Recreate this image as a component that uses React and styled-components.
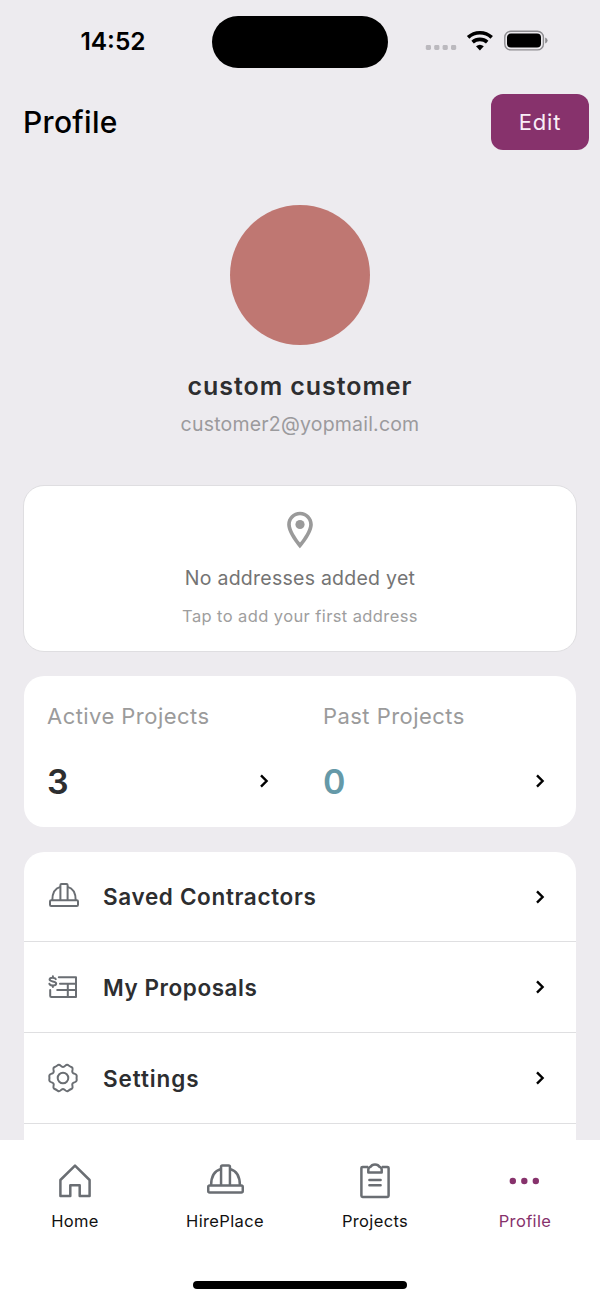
import styled, { createGlobalStyle } from 'styled-components';

const GlobalStyle = createGlobalStyle`
  * {
    box-sizing: border-box;
  }
  body {
    margin: 0;
    font-family: Inter, Roboto, sans-serif;
    background-color: #edebef;
  }
`;

const Screen = styled.div`
  display: flex;
  flex-direction: column;
  width: 600px;
  height: 1300px;
  overflow: hidden;
  background-color: #edebef;
`;

const StatusBar = styled.div`
  display: grid;
  grid-template-columns: 212px 176px 212px;
  align-items: center;
  height: 83px;
  flex-shrink: 0;
`;

const Time = styled.div`
  padding: 0 0 2px 14px;
  text-align: center;
  font-size: 24.5px;
  font-weight: 600;
  color: #000;
`;

const Island = styled.div`
  height: 52px;
  border-radius: 26px;
  background-color: #000;
`;

const StatusIcons = styled.div`
  display: flex;
  align-items: center;
  padding: 0 0 2px 37px;
  svg {
    display: block;
  }
`;

const Header = styled.div`
  display: flex;
  justify-content: space-between;
  align-items: center;
  height: 77px;
  padding: 0 11px 0 23px;
  flex-shrink: 0;
`;

const Text = styled.div`
  font-size: ${(props) => props.$size}px;
  font-weight: ${(props) => props.$weight || 400};
  line-height: ${(props) => props.$line}px;
  letter-spacing: ${(props) => props.$spacing || 0}px;
  color: ${(props) => props.$color || '#000'};
  white-space: nowrap;
`;

const EditButton = styled.button`
  width: 98px;
  height: 56px;
  padding: 0;
  border: none;
  border-radius: 12px;
  background-color: #87326c;
  color: #f9eef6;
  font-family: inherit;
  font-size: 22px;
  letter-spacing: 0.8px;
`;

const Content = styled.div`
  display: flex;
  flex-direction: column;
  flex: 1;
  min-height: 0;
  padding: 45px 24px 0;
  overflow: hidden;
`;

const User = styled.div`
  display: flex;
  flex-direction: column;
  align-items: center;
  height: 280px;
  flex-shrink: 0;
`;

const Avatar = styled.div`
  width: 140px;
  height: 140px;
  margin-bottom: 25px;
  border-radius: 50%;
  background-color: #bf7772;
`;

const AddressCard = styled.div`
  display: flex;
  flex-direction: column;
  align-items: center;
  height: 167px;
  margin: 0 -1px 24px;
  padding-top: 22px;
  border: 1px solid #dfdee1;
  border-radius: 21px;
  background-color: #fff;
  flex-shrink: 0;
`;

const Stats = styled.div`
  display: grid;
  grid-template-columns: 1fr 1fr;
  height: 151px;
  margin-bottom: 25px;
  border-radius: 20px;
  background-color: #fff;
  flex-shrink: 0;
`;

const Stat = styled.div`
  padding: 26px 30px 0 23px;
`;

const StatValue = styled.div`
  display: flex;
  justify-content: space-between;
  align-items: center;
  margin-top: 29px;
`;

const StatNumber = styled(Text)`
  padding-top: 2px;
  margin-bottom: -1px;
`;

const Menu = styled.div`
  border-radius: 20px 20px 0 0;
  background-color: #fff;
  flex-shrink: 0;
`;

const MenuRow = styled.div`
  display: flex;
  align-items: center;
  height: ${(props) => props.$height}px;
  padding: 0 30px 0 24px;
  border-bottom: 1px solid #dfdfe1;
`;

const MenuIcon = styled.div`
  display: flex;
  width: 55px;
`;

const HelmetBox = styled.div`
  display: flex;
  padding: ${(props) => props.$pad};
`;

const MenuLabel = styled(Text)`
  flex: 1;
  padding-top: 1px;
`;

const TabBar = styled.div`
  display: grid;
  grid-template-columns: repeat(4, 1fr);
  height: 160px;
  padding-top: 20px;
  background-color: #fff;
  flex-shrink: 0;
  position: relative;
`;

const Tab = styled.div`
  display: flex;
  flex-direction: column;
  align-items: center;
`;

const TabIcon = styled.div`
  display: flex;
  align-items: center;
  justify-content: center;
  height: 42px;
  margin-bottom: 9px;
`;

const HomeIndicator = styled.div`
  position: absolute;
  left: 193px;
  bottom: 11px;
  width: 214px;
  height: 8px;
  border-radius: 4px;
  background-color: #000;
`;

const iconGray = '#6a6e73';

const Chevron = () => (
  <svg width="12" height="16" viewBox="0 0 12 16" fill="none">
    <path d="M3 2.3 L8.6 8 L3 13.7" stroke="#000" strokeWidth="2.4" />
  </svg>
);

const Helmet = ({ width = 30, height = 24 }) => (
  <svg
    width={width}
    height={height}
    viewBox="0 0 30 24"
    fill="none"
    stroke={iconGray}
    strokeWidth="2"
    strokeLinejoin="round"
  >
    <rect x="1" y="17.3" width="28" height="5.7" rx="1.2" />
    <path d="M11.4 17.4 V2.1 Q11.4 1 12.5 1 H17.5 Q18.6 1 18.6 2.1 V17.4" />
    <path d="M11.4 3.9 C6.3 5.2 3.3 9.4 3.3 17.4 M18.6 3.9 C23.7 5.2 26.7 9.4 26.7 17.4" />
  </svg>
);

const Proposal = () => (
  <svg
    width="30"
    height="24"
    viewBox="0 0 30 24"
    fill="none"
    stroke={iconGray}
    strokeWidth="2"
    strokeLinecap="round"
    strokeLinejoin="round"
  >
    <path d="M10.8 2.2 H28 V22 H3.3 Q2.2 22 2.2 21 V15" />
    <path d="M12 8.8 H28 M9.2 15 H28 M19.8 8.8 V22" />
    <path d="M7.8 4.2 C7 2.3 1.6 2 1.6 4.6 C1.6 7.2 8.2 5.6 8.2 8.6 C8.2 11.2 2.2 11 1.4 8.8 M4.9 1.2 V2.6 M4.9 10.6 V12" />
  </svg>
);

// six rounded teeth, one every 60 degrees
const gearPath = () => {
  const point = (deg, r) => {
    const a = (deg * Math.PI) / 180;
    return `${(15 + r * Math.cos(a)).toFixed(2)} ${(15 + r * Math.sin(a)).toFixed(2)}`;
  };
  let d = `M${point(-24, 11.1)}`;
  for (let deg = 0; deg < 360; deg += 60) {
    d += ` L${point(deg - 19, 12.6)} Q${point(deg - 15, 14.1)} ${point(deg - 9, 13.9)}`;
    d += ` Q${point(deg, 13.4)} ${point(deg + 9, 13.9)} Q${point(deg + 15, 14.1)} ${point(deg + 19, 12.6)}`;
    d += ` Q${point(deg + 24, 11.1)} ${point(deg + 30, 11)} Q${point(deg + 36, 11.1)} ${point(deg + 41, 12.6)}`;
  }
  return `${d.replace(/^M\S+ \S+ L/, 'M')} Z`;
};

const Gear = () => (
  <svg
    width="30"
    height="30"
    viewBox="0 0 30 30"
    fill="none"
    stroke={iconGray}
    strokeWidth="2"
    strokeLinejoin="round"
  >
    <path d={gearPath()} />
    <circle cx="15" cy="15" r="5.3" />
  </svg>
);

const Pin = () => (
  <svg width="44" height="44" viewBox="0 0 24 24" fill="#9a9a9a">
    <path d="M12 2C8.13 2 5 5.13 5 9c0 5.25 7 13 7 13s7-7.75 7-13c0-3.87-3.13-7-7-7zM7 9c0-2.76 2.24-5 5-5s5 2.24 5 5c0 2.88-2.88 7.19-5 9.88C9.92 16.21 7 11.85 7 9z" />
    <circle cx="12" cy="9" r="2.5" />
  </svg>
);

const HomeIcon = () => (
  <svg
    width="34"
    height="34"
    viewBox="0 0 34 34"
    fill="none"
    stroke={iconGray}
    strokeWidth="2.5"
    strokeLinejoin="round"
  >
    <path d="M17 1.6 L31.6 16 V32 H21.7 V21.2 H12.3 V32 H2.4 V16 Z" />
  </svg>
);

const Clipboard = () => (
  <svg
    width="30"
    height="36"
    viewBox="0 0 30 36"
    fill="none"
    stroke={iconGray}
    strokeWidth="2.5"
    strokeLinejoin="round"
  >
    <path d="M8 3.9 H2.5 Q1.4 3.9 1.4 5 V32.8 Q1.4 34 2.6 34 H27.4 Q28.6 34 28.6 32.8 V5 Q28.6 3.9 27.5 3.9 H22" />
    <path d="M8.3 9.5 V6.5 Q8.5 4.2 10.7 3.8 C12 0.6 18 0.6 19.3 3.8 Q21.5 4.2 21.7 6.5 V9.5 Z" />
    <path d="M9.4 16.9 H20.6 M9.4 22.2 H20.6" strokeLinecap="round" />
  </svg>
);

const Dots = () => (
  <svg width="32" height="8" viewBox="0 0 32 8" fill="#87326c">
    <circle cx="3.8" cy="4" r="3.2" />
    <circle cx="15.3" cy="4" r="3.2" />
    <circle cx="26.8" cy="4" r="3.2" />
  </svg>
);

const StatusGlyphs = () => (
  <svg width="124" height="24" viewBox="0 0 124 24">
    <g fill="#bbb9be">
      <rect x="0.8" y="16" width="5.2" height="5" rx="1.4" />
      <rect x="9.2" y="16" width="5.2" height="5" rx="1.4" />
      <rect x="17.6" y="16" width="5.2" height="5" rx="1.4" />
      <rect x="26" y="16" width="5.2" height="5" rx="1.4" />
    </g>
    <g fill="none" stroke="#000" strokeWidth="3.6">
      <path d="M43.1 8.4 A17.3 17.3 0 0 1 66.7 8.4" />
      <path d="M47.6 13.2 A10.8 10.8 0 0 1 62.2 13.2" />
    </g>
    <path d="M51 17.3 Q54.9 14.2 58.8 17.3 L54.9 21.4 Z" fill="#000" />
    <rect x="79.8" y="2.3" width="38.6" height="18.6" rx="6" fill="none" stroke="#8d8c90" strokeWidth="1.4" />
    <rect x="82" y="4.6" width="34" height="14" rx="4" fill="#000" />
    <path d="M120.2 8.6 Q122.6 9.6 122.6 11.6 Q122.6 13.6 120.2 14.6 Z" fill="#8d8c90" />
  </svg>
);

const stats = [
  { title: 'Active Projects', value: 3, color: '#2d2e30' },
  { title: 'Past Projects', value: 0, color: '#6599a8' },
];

const menu = [
  {
    label: 'Saved Contractors',
    icon: (
      <HelmetBox $pad="0 0 3px 1px">
        <Helmet />
      </HelmetBox>
    ),
    height: 90,
    spacing: 0.65,
  },
  { label: 'My Proposals', icon: <Proposal />, height: 91, spacing: 0.55 },
  { label: 'Settings', icon: <Gear />, height: 91, spacing: 0.9 },
  { label: '', icon: null, height: 91 },
];

const tabs = [
  { label: 'Home', icon: <HomeIcon /> },
  {
    label: 'HirePlace',
    icon: (
      <HelmetBox $pad="0 0 4px">
        <Helmet width={37} height={30} />
      </HelmetBox>
    ),
  },
  { label: 'Projects', icon: <Clipboard /> },
  { label: 'Profile', icon: <Dots />, active: true },
];

function App() {
  return (
    <>
      <GlobalStyle />
      <Screen>
        <StatusBar>
          <Time>14:52</Time>
          <Island />
          <StatusIcons>
            <StatusGlyphs />
          </StatusIcons>
        </StatusBar>
        <Header>
          <Text $size={30} $weight={500} $line={36} $spacing={0.3}>
            Profile
          </Text>
          <EditButton>Edit</EditButton>
        </Header>
        <Content>
          <User>
            <Avatar />
            <Text $size={25} $weight={600} $line={32} $spacing={0.93} $color="#2d2e30">
              custom customer
            </Text>
            <Text $size={19.5} $line={44} $spacing={0.2} $color="#9b9a9d">
              customer2@yopmail.com
            </Text>
          </User>
          <AddressCard>
            <Pin />
            <Text $size={19.5} $line={53} $spacing={0.25} $color="#747474">
              No addresses added yet
            </Text>
            <Text $size={16.5} $line={23} $spacing={0.4} $color="#9e9e9e">
              Tap to add your first address
            </Text>
          </AddressCard>
          <Stats>
            {stats.map((stat) => (
              <Stat key={stat.title}>
                <Text $size={22} $line={28} $spacing={0.45} $color="#9b9b9b">
                  {stat.title}
                </Text>
                <StatValue>
                  <StatNumber $size={34} $weight={600} $line={42} $color={stat.color}>
                    {stat.value}
                  </StatNumber>
                  <Chevron />
                </StatValue>
              </Stat>
            ))}
          </Stats>
          <Menu>
            {menu.map((item) => (
              <MenuRow key={item.label} $height={item.height}>
                <MenuIcon>{item.icon}</MenuIcon>
                <MenuLabel
                  $size={22.5}
                  $weight={600}
                  $line={28}
                  $spacing={item.spacing}
                  $color="#2d2e30"
                >
                  {item.label}
                </MenuLabel>
                <Chevron />
              </MenuRow>
            ))}
          </Menu>
        </Content>
        <TabBar>
          {tabs.map((tab) => (
            <Tab key={tab.label}>
              <TabIcon>{tab.icon}</TabIcon>
              <Text
                $size={16.5}
                $line={20}
                $spacing={0.35}
                $color={tab.active ? '#87326c' : '#111'}
              >
                {tab.label}
              </Text>
            </Tab>
          ))}
          <HomeIndicator />
        </TabBar>
      </Screen>
    </>
  );
}

export default App;
